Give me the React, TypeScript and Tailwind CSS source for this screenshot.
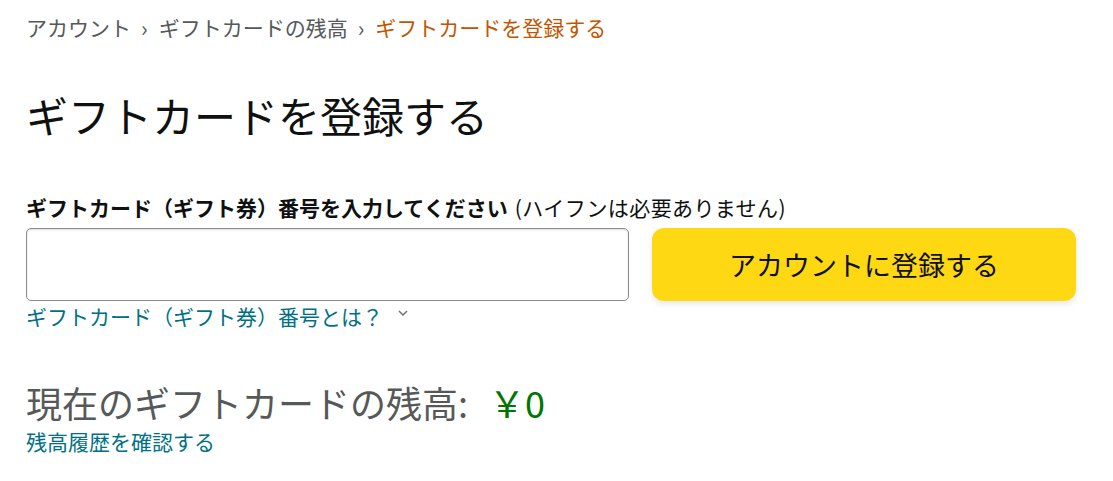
import React from "react";

export default function App() {
  const font = { fontFamily: '"Noto Sans CJK JP", "Noto Sans", sans-serif' };
  return (
    <div className="w-[1113px] h-[481px] bg-white overflow-hidden pl-[26px]" style={font}>
      <div className="pt-[12px] h-[42px] flex items-center text-[21px] leading-[30px] text-[#565959]">
        <span>アカウント</span>
        <span className="ml-[10px] mr-[11px] text-[22px]">›</span>
        <span>ギフトカードの残高</span>
        <span className="ml-[10px] mr-[11px] text-[22px]">›</span>
        <span className="text-[#c45500]">ギフトカードを登録する</span>
      </div>
      <h1 className="mt-[46px] text-[42px] leading-[54px] text-[#0f1111] font-normal">
        ギフトカードを登録する
      </h1>
      <div className="mt-[50px] text-[21px] leading-[30px] text-[#0f1111]">
        <span className="font-bold">ギフトカード（ギフト券）番号を入力してください</span>
        <span className="ml-[7px] tracking-[0.4px]">(ハイフンは必要ありません)</span>
      </div>
      <div className="mt-[6px] flex gap-[23px]">
        <input
          className="w-[603px] h-[73px] border border-[#888c8c] rounded-[5px] outline-none px-3 text-[21px] shadow-[inset_0_1px_2px_rgba(15,17,17,0.15)]"
          type="text"
        />
        <button
          className="w-[424px] h-[73px] rounded-[12px] bg-[#ffd814] text-[#0f1111] text-[27px] leading-[30px] shadow-[0_3px_6px_rgba(213,217,217,0.6)]"
          style={font}
        >
          アカウントに登録する
        </button>
      </div>
      <div className="h-[30px] flex items-center text-[21px] leading-[30px] text-[#007185]">
        <span>ギフトカード（ギフト券）番号とは？</span>
        <svg className="ml-[15px] mt-[-6px]" width="10" height="6" viewBox="0 0 10 6">
          <path d="M1 1 L5 5 L9 1" fill="none" stroke="#6f7373" strokeWidth="1.5" />
        </svg>
      </div>
      <div className="mt-[47px] text-[36px] leading-[48px] text-[#565959] flex items-baseline">
        <span>現在のギフトカードの残高:</span>
        <span className="ml-[21px] text-[#007600]">￥0</span>
      </div>
      <div className="text-[21px] leading-[30px] text-[#007185]">残高履歴を確認する</div>
    </div>
  );
}
